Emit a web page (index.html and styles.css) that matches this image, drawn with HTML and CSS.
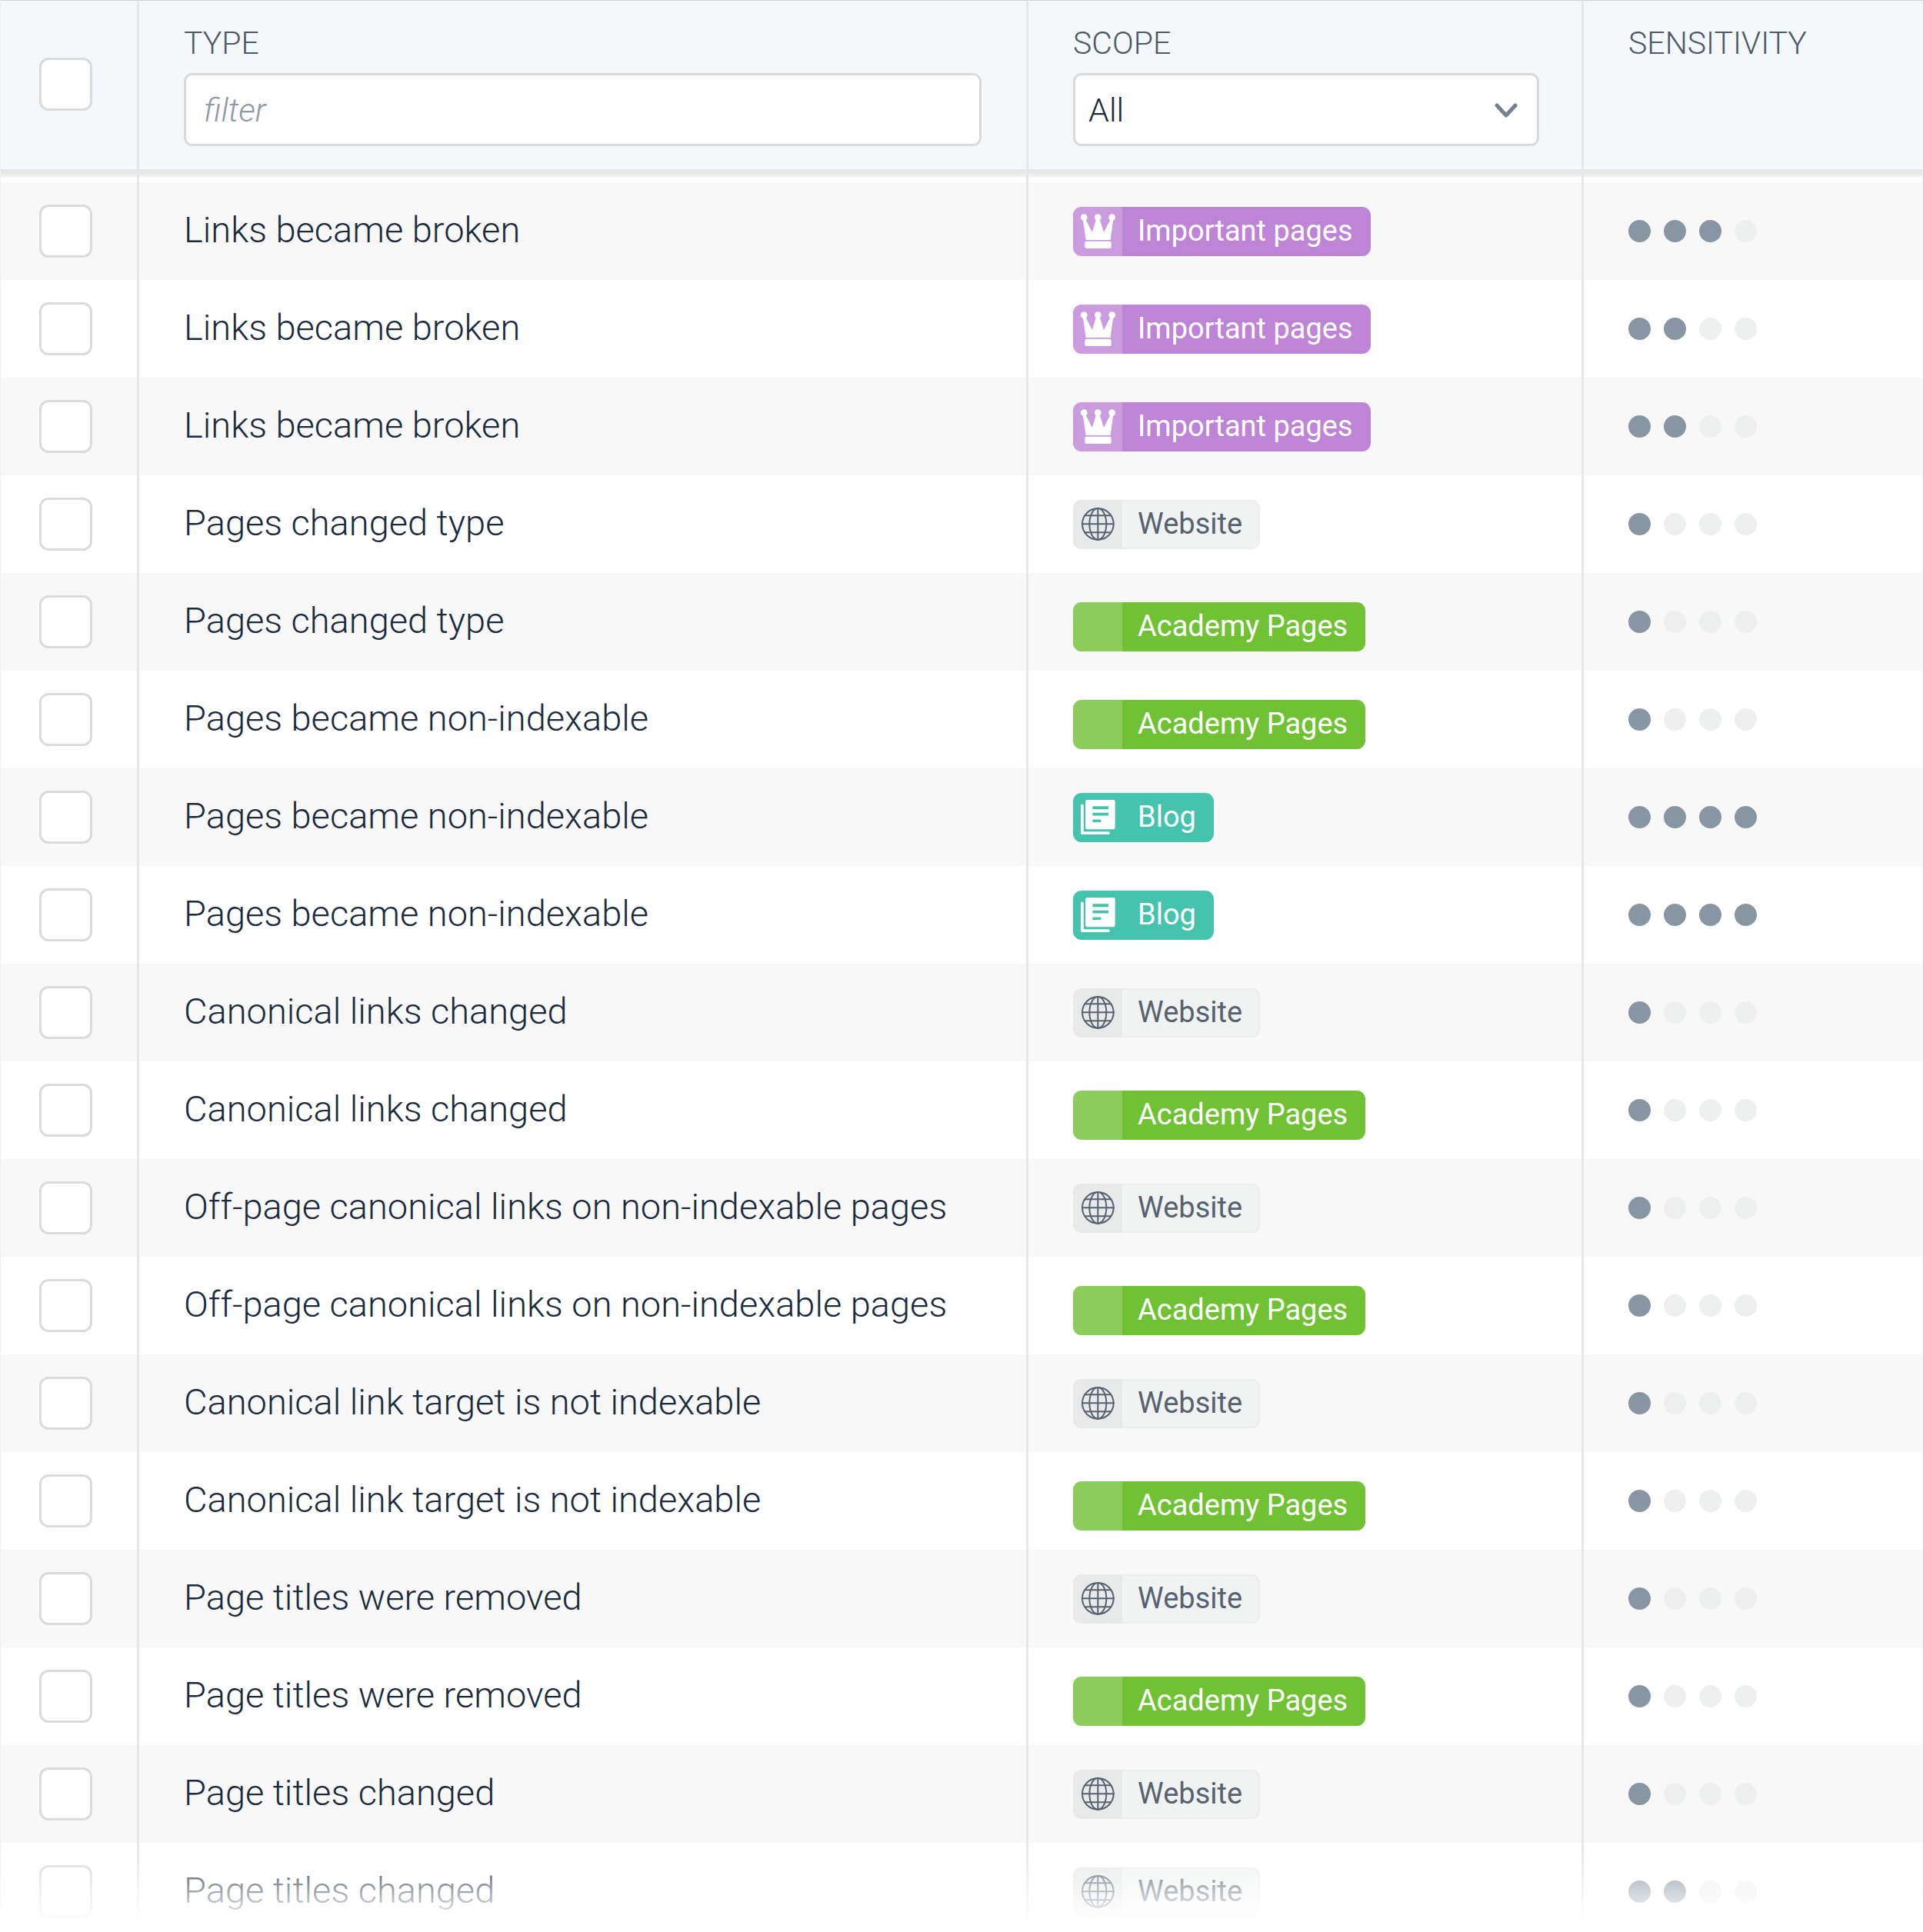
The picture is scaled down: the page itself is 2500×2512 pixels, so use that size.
FILE: index.html
```html
<!DOCTYPE html>
<html lang="en">
<head>
    <meta charset="UTF-8">
    <meta name="viewport" content="width=device-width, initial-scale=1.0">
    <title>Alerts</title>
    <link rel="stylesheet" href="styles.css">
</head>
<body>
    <svg class="sprite" aria-hidden="true">
        <symbol id="icon-crown" viewBox="0 0 135 135">
            <circle cx="13" cy="14" r="13"/>
            <circle cx="67" cy="14" r="13"/>
            <circle cx="122" cy="14" r="13"/>
            <path d="M8 20 L20 102 H116 L127 20 L116 22 L90 72 L74 22 H60 L45 72 L19 22 Z"/>
            <rect x="16" y="107" width="103" height="28" rx="6"/>
        </symbol>
        <symbol id="icon-globe" viewBox="0 0 135 135">
            <g fill="none" stroke="currentColor" stroke-width="6">
                <circle cx="67" cy="67" r="61"/>
                <ellipse cx="67" cy="67" rx="33" ry="61"/>
                <path d="M67 3 V132 M3 67 H132 M16 34 H118 M16 100 H118"/>
            </g>
        </symbol>
        <symbol id="icon-blog" viewBox="0 0 140 140">
            <path d="M6 23 V134 H112" fill="none" stroke="currentColor" stroke-width="12" stroke-linecap="round" stroke-linejoin="round"/>
            <path fill-rule="evenodd" d="M26 0 H132 Q139 0 139 7 V112 Q139 119 132 119 H26 Q19 119 19 112 V7 Q19 0 26 0 Z M48 26 V38 H112 V26 Z M48 52 V64 H112 V52 Z M48 79 V90 H82 V79 Z"/>
        </symbol>
    </svg>

    <div class="alerts">
        <table class="alerts-table">
            <colgroup>
                <col class="col-check">
                <col class="col-type">
                <col class="col-scope">
                <col>
            </colgroup>
            <thead>
                <tr>
                    <th class="check-cell"><input type="checkbox" class="checkbox" aria-label="Select all"></th>
                    <th>
                        <label class="col-label" for="typeFilter">TYPE</label>
                        <input type="text" class="field" id="typeFilter" placeholder="filter">
                    </th>
                    <th class="scope-cell">
                        <label class="col-label" for="scopeFilter">SCOPE</label>
                        <div class="select-wrap">
                            <select class="field" id="scopeFilter">
                                <option>All</option>
                                <option>Important pages</option>
                                <option>Website</option>
                                <option>Academy Pages</option>
                                <option>Blog</option>
                            </select>
                            <svg class="chevron" viewBox="0 0 30 20" aria-hidden="true"><path d="M3 3 L15 16 L27 3"/></svg>
                        </div>
                    </th>
                    <th><span class="col-label">SENSITIVITY</span></th>
                </tr>
            </thead>
            <tbody id="alertRows"></tbody>
        </table>
        <div class="fade"></div>
    </div>

    <script>
        const scopes = {
            important: { label: 'Important pages', icon: 'icon-crown' },
            website: { label: 'Website', icon: 'icon-globe' },
            academy: { label: 'Academy Pages' },
            blog: { label: 'Blog', icon: 'icon-blog' }
        };

        const alerts = [
            ['Links became broken', 'important', 3],
            ['Links became broken', 'important', 2],
            ['Links became broken', 'important', 2],
            ['Pages changed type', 'website', 1],
            ['Pages changed type', 'academy', 1],
            ['Pages became non-indexable', 'academy', 1],
            ['Pages became non-indexable', 'blog', 4],
            ['Pages became non-indexable', 'blog', 4],
            ['Canonical links changed', 'website', 1],
            ['Canonical links changed', 'academy', 1],
            ['Off-page canonical links on non-indexable pages', 'website', 1],
            ['Off-page canonical links on non-indexable pages', 'academy', 1],
            ['Canonical link target is not indexable', 'website', 1],
            ['Canonical link target is not indexable', 'academy', 1],
            ['Page titles were removed', 'website', 1],
            ['Page titles were removed', 'academy', 1],
            ['Page titles changed', 'website', 1],
            ['Page titles changed', 'website', 2]
        ];

        function renderBadge(scope) {
            const { label, icon } = scopes[scope];
            const svg = icon ? `<svg><use href="#${icon}"/></svg>` : '';
            return `<span class="badge badge-${scope}"><span class="badge-icon">${svg}</span><span class="badge-text">${label}</span></span>`;
        }

        function renderDots(level) {
            let dots = '';
            for (let i = 1; i <= 4; i++) {
                dots += `<span class="dot${i <= level ? ' on' : ''}"></span>`;
            }
            return `<div class="dots" role="img" aria-label="${level} of 4">${dots}</div>`;
        }

        document.getElementById('alertRows').innerHTML = alerts.map(([type, scope, level]) => `
            <tr>
                <td class="check-cell"><input type="checkbox" class="checkbox" aria-label="${type}"></td>
                <td class="type-cell">${type}</td>
                <td>${renderBadge(scope)}</td>
                <td>${renderDots(level)}</td>
            </tr>
        `).join('');
    </script>
</body>
</html>
```
FILE: styles.css
```css
* {
    box-sizing: border-box;
}
body {
    margin: 0;
    background-color: #fff;
    font-family: Roboto, sans-serif;
    font-weight: 300;
    color: #1b2b3e;
}
.sprite {
    display: none;
}
.alerts {
    position: relative;
    height: 100vh;
    overflow: hidden;
}
.alerts-table {
    width: 100%;
    table-layout: fixed;
    border-collapse: separate;
    border-spacing: 0;
}
.col-check {
    width: 181px;
}
.col-type {
    width: 46.24%;
}
.col-scope {
    width: 28.88%;
}
th,
td {
    padding: 0 58px;
    border-right: 3px solid #e6e7e7;
    text-align: left;
}
th:first-child,
td:first-child {
    border-left: 1px solid #f1f1f1;
}
th:last-child,
td:last-child {
    border-right: 1px solid #f1f1f1;
}
th {
    height: 220px;
    padding-top: 31px;
    border-top: 1px solid #d0d2d6;
    background-color: #f4f8fb;
    font-weight: 300;
    vertical-align: top;
}
td {
    height: 127px;
    font-size: 47px;
    line-height: 56px;
    white-space: nowrap;
    vertical-align: middle;
}
tbody tr:nth-child(odd) td {
    background-color: #f8f8f8;
}
/* shadow under the header, then a strip of white before the first row */
tbody tr:first-child td {
    height: 144px;
    padding-top: 17px;
    background-image: linear-gradient(#e3e4e4 0, #e8e9e9 5px, #f4f4f4 10px, #fff 11px, #fff 17px, transparent 17px);
}
th.check-cell,
td.check-cell {
    padding-right: 0;
    padding-left: 50px;
    vertical-align: middle;
}
th.check-cell {
    padding-top: 0;
    padding-bottom: 2px;
}
.type-cell {
    padding-bottom: 3px;
}
.scope-cell {
    padding-right: 55px;
}
.checkbox {
    display: block;
    appearance: none;
    width: 69px;
    height: 69px;
    margin: 0;
    border: 3px solid #dadbdc;
    border-radius: 12px;
    background-color: #fff;
}
.checkbox:checked {
    background-color: #8896a4;
}
.col-label {
    display: block;
    margin-bottom: 15px;
    font-size: 41px;
    line-height: 48px;
    color: #4d5967;
}
.field {
    display: block;
    appearance: none;
    width: 100%;
    height: 95px;
    padding: 0 23px;
    border: 3px solid #d9dadb;
    border-radius: 11px;
    background-color: #fff;
    font-family: inherit;
    font-size: 43px;
    font-weight: 300;
    color: #1b2b3e;
}
.field::placeholder {
    font-style: italic;
    color: #8f99a4;
    opacity: 1;
}
select.field {
    padding: 0 70px 0 17px;
}
.select-wrap {
    position: relative;
}
.chevron {
    position: absolute;
    top: 39px;
    right: 28px;
    width: 30px;
    height: 20px;
    fill: none;
    stroke: #75818e;
    stroke-width: 5;
    stroke-linecap: round;
    stroke-linejoin: round;
    pointer-events: none;
}
.badge {
    display: inline-flex;
    height: 64px;
    border-radius: 11px;
    overflow: hidden;
    vertical-align: middle;
    font-size: 38px;
    font-weight: 400;
    line-height: 62px;
    color: #fff;
}
.badge-icon {
    display: flex;
    align-items: center;
    justify-content: center;
    width: 64px;
    background-color: rgba(255, 255, 255, 0.19);
}
.badge-icon svg {
    width: 45px;
    height: 45px;
    fill: currentColor;
}
.badge-text {
    padding: 0 23px 0 20px;
}
.badge-important {
    background-color: #be84d5;
}
.badge-website {
    background-color: #f1f3f3;
    box-shadow: inset 0 0 0 2px #eceeee;
    color: #566270;
}
.badge-website .badge-icon {
    background-color: #e8e9e9;
}
.badge-academy {
    margin-top: 12px;
    background-color: #71c134;
}
.badge-blog {
    background-color: #45c3ad;
}
.badge-blog .badge-icon {
    background-color: transparent;
}
.dots {
    display: flex;
    gap: 17px;
}
.dot {
    width: 29px;
    height: 29px;
    border-radius: 50%;
    background-color: #eef0f0;
}
.dot.on {
    background-color: #8896a4;
}
.fade {
    position: absolute;
    right: 0;
    bottom: 0;
    left: 0;
    height: 112px;
    background: linear-gradient(rgba(255, 255, 255, 0), #fff 90%);
    pointer-events: none;
}
```
